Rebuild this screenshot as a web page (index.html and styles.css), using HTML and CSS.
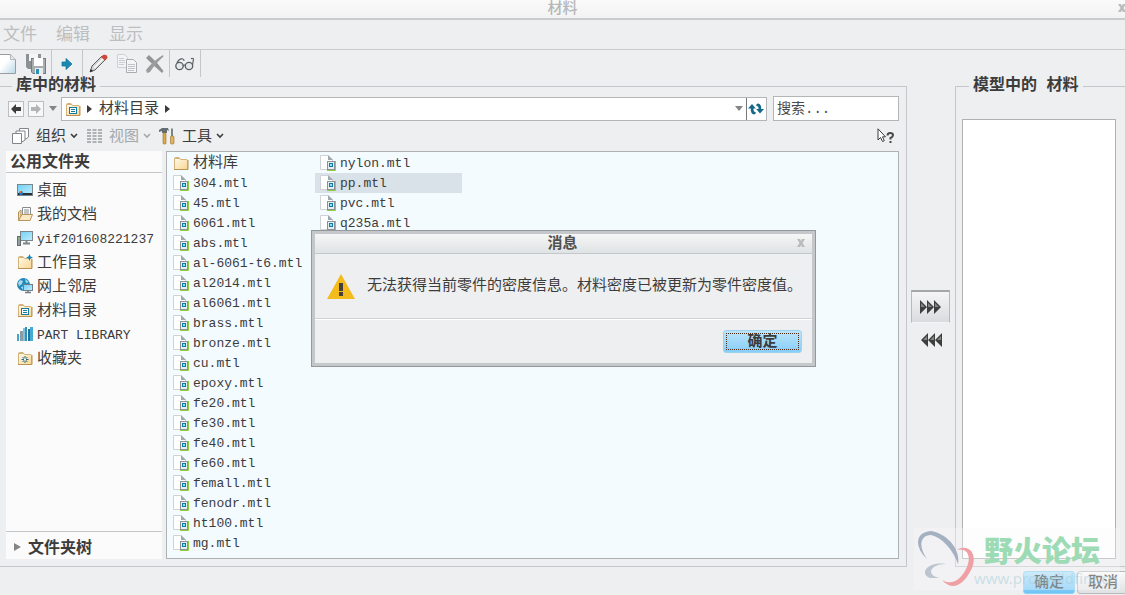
FILE: index.html
```html
<!DOCTYPE html>
<html lang="zh-CN">
<head>
<meta charset="utf-8">
<title>材料</title>
<link rel="stylesheet" href="styles.css">
</head>
<body>
<svg class="defs" aria-hidden="true">
  <defs>
    <linearGradient id="folderFill" x1="0" y1="0" x2="1" y2="1"><stop offset="0" stop-color="#fffaf0"/><stop offset="1" stop-color="#fbd68e"/></linearGradient>
    <linearGradient id="pageFill" x1="0" y1="0" x2="1" y2="1"><stop offset=".4" stop-color="#fff"/><stop offset="1" stop-color="#b9d8e6"/></linearGradient>
    <linearGradient id="screenFill" x1="0" y1="0" x2="1" y2="1"><stop offset="0" stop-color="#6fd0f5"/><stop offset="1" stop-color="#c3ecfc"/></linearGradient>
    <symbol id="folder" viewBox="0 0 16 16"><path d="M1.5 14.500V3.500Q1.500 2.500 2.500 2.500H6L7.500 4.500H13.500Q14.500 4.500 14.500 5.500V14.500Z" fill="url(#folderFill)" stroke="#d3b27a"/><path d="M1 14.500H15V5" fill="none" stroke="#b89356"/><path d="M2 3.500H7" stroke="#d3b27a"/></symbol>
    <symbol id="mtl" viewBox="0 0 16 16"><path d="M.5 14.500V.5H8L12.500 5V14.500Z" fill="#fff" stroke="#d0d3d5"/><path d="M8 0V5H13Z" fill="#9fa8ac"/><path d="M15.500 6V15.500H7" fill="none" stroke="#8bd03a"/><rect x="7.500" y="6.500" width="7" height="8" fill="#e8edef" stroke="#8b9195"/><rect x="9" y="8" width="4" height="4" fill="#0d7ba8"/><rect x="10" y="9" width="2" height="2" fill="#8ee2f5"/></symbol>
    <symbol id="chev" viewBox="0 0 8 6"><path d="M1 1L4 4L7 1" fill="none" stroke="currentColor" stroke-width="1.600"/></symbol>
    <symbol id="right" viewBox="0 0 5 8"><path d="M0 0L5 4L0 8Z" fill="currentColor"/></symbol>
    <symbol id="down" viewBox="0 0 8 5"><path d="M0 0H8L4 5Z" fill="#858585"/></symbol>
    <symbol id="back" viewBox="0 0 12 12"><path d="M1 6L6 1V4H11V8H6V11Z" fill="currentColor"/></symbol>
    <symbol id="close" viewBox="0 0 8 8"><path d="M0 0H3L4 2L5 0H8L5.500 4L8 8H5L4 6L3 8H0L2.500 4Z" fill="#b9bbbc"/></symbol>
    <symbol id="triple" viewBox="0 0 22 14"><path d="M0 0L7 7L0 14ZM7 0L14 7L7 14ZM14 0L21 7L14 14Z" fill="#3e3e3e"/><path d="M1 3L5 7H1ZM8 3L12 7H8ZM15 3L19 7H15Z" fill="#858585"/></symbol>
    <symbol id="catalog" viewBox="0 0 16 16"><use href="#folder"/><rect x="4.500" y="6.500" width="7" height="6" fill="#fff" stroke="#16799f"/><path d="M6 8.500H10M6 10.500H10" stroke="#16799f"/></symbol>
  </defs>
</svg>

<div class="window">
  <header class="titlebar">
    <h1>材料</h1>
    <button class="plain win-close" aria-label="关闭"><svg width="8" height="8"><use href="#close"/></svg></button>
  </header>

  <nav class="menubar">
    <button class="plain">文件</button><button class="plain">编辑</button><button class="plain">显示</button>
  </nav>

  <div class="toolbar">
    <div class="tools first">
      <button class="plain" aria-label="新建"><svg width="16" height="20" viewBox="0 0 16 20"><path d="M-1 .5H10.500L15.500 5.500V19.500H-1Z" fill="url(#pageFill)" stroke="#999da0"/><path d="M10.500 .5V5.500H15.500" fill="#e5e7e8" stroke="#b5b9bb"/></svg></button>
      <button class="plain" aria-label="保存"><svg width="20" height="20" viewBox="0 0 20 20"><path d="M0 0H15V15H2L0 13Z" fill="#8c9194"/><rect x="3" y="0" width="9" height="7" fill="#f3f5f6"/><path d="M5 4H20V20H7L5 18Z" fill="#777c80"/><path d="M6 5H19V19H7L6 18Z" fill="#a8adb0"/><rect x="8" y="4" width="9" height="8" fill="#fff"/><rect x="9" y="14" width="8" height="6" fill="#e7ecef"/><rect x="10" y="15" width="3" height="5" fill="#2c91b5"/></svg></button>
    </div>
    <div class="tools"><button class="plain" aria-label="添加"><svg width="12" height="12" viewBox="0 0 12 12"><path d="M1 4H5V.5L11 6L5 11.500V8H1Z" fill="#168bb6" stroke="#11678a" stroke-width=".7"/></svg></button></div>
    <div class="tools edit">
      <button class="plain" aria-label="编辑"><svg width="19" height="20" viewBox="0 0 19 20"><path d="M1 18L3 12L13 2L17 5L6 16Z" fill="#d2d4d5" stroke="#5f6264"/><path d="M5 14L14 5" stroke="#fff" stroke-width="1.500"/><path d="M12 3L14.500 .8Q18.500 0 18.500 4L16 6.500Z" fill="#d0463b"/><path d="M1 18L1.800 15L4 17Z" fill="#222"/></svg></button>
      <button class="plain" aria-label="复制"><svg width="20" height="20" viewBox="0 0 20 20"><path d="M.5 .5H7.500L10.500 3.500V13.500H.5Z" fill="#f2f3f4" stroke="#ced1d3"/><path d="M2 4.500H7M2 6.500H8M2 8.500H8M2 10.500H7" stroke="#c9cdcf"/><path d="M9.500 5.500H16.500L19.500 8.500V18.500H9.500Z" fill="#f4f5f6" stroke="#a9adb0"/><path d="M11 10.500H18M11 12.500H18M11 14.500H18M11 16.500H17" stroke="#bfc3c5"/></svg></button>
      <button class="plain" aria-label="删除"><svg width="18" height="18" viewBox="0 0 18 18"><path d="M0 3L3 0Q11 7 17.500 16L16 18Q8 11 0 3Z" fill="#929496"/><path d="M17 0L17.500 1.500Q9 9 4 17L1 18L0 15Q7 6 17 0Z" fill="#9a9c9e"/></svg></button>
    </div>
    <div class="tools"><button class="plain" aria-label="查看"><svg width="20" height="14" viewBox="0 0 20 14"><g fill="#e2e9ec" stroke="#5b5f62" stroke-width="1.300"><circle cx="4.500" cy="9" r="3.700"/><circle cx="14" cy="9" r="3.700"/></g><path d="M8 9Q9.300 7 10.500 9M2 6Q4 1 8 2Q9 2 9 4M17.500 8L18.500 2Q17 .5 16 2" fill="none" stroke="#5b5f62" stroke-width="1.200"/></svg></button></div>
  </div>

  <main>
    <fieldset class="group library">
      <legend>库中的材料</legend>
      <div class="path-row">
        <button class="nav-btn" aria-label="后退"><svg width="12" height="12"><use href="#back"/></svg></button>
        <button class="nav-btn forward" aria-label="前进"><svg class="flip" width="12" height="12"><use href="#back"/></svg></button>
        <button class="plain history" aria-label="历史"><svg width="8" height="5"><use href="#down"/></svg></button>
        <div class="path">
          <svg width="16" height="16"><use href="#catalog"/></svg>
          <svg class="crumb" width="5" height="8"><use href="#right"/></svg>
          <a href="#">材料目录</a>
          <svg width="5" height="8"><use href="#right"/></svg>
          <button class="plain drop" aria-label="展开路径"><svg width="8" height="5"><use href="#down"/></svg></button>
          <button class="plain refresh" aria-label="刷新"><svg width="16" height="14" viewBox="0 0 16 14"><path d="M6 12.500Q2.500 12 2.800 6.500H0L4 2L7.800 6.500H5.500Q5 9.500 8 10.500Q7.500 12.500 6 12.500ZM10 1.500Q13.500 2 13.200 7H16L12 11.500L8.200 7H10.500Q11 4.500 8 3.500Q8.500 1.500 10 1.500Z" fill="#16688b"/></svg></button>
        </div>
        <input class="search" type="text" aria-label="搜索" placeholder="搜索...">
      </div>
      <div class="actions">
        <button class="plain organize"><svg width="17" height="16" viewBox="0 0 17 16"><g fill="#fff" stroke="#808589"><path d="M7.500 .5H16.500V9L14 11H7.500Z"/><path d="M4 3H13V12L11 13.500H4Z"/><path d="M.5 5.500H9.500V15.500H.5Z"/></g></svg><span>组织</span><svg width="8" height="6"><use href="#chev"/></svg></button>
        <button class="plain view"><svg width="15" height="14" viewBox="0 0 15 14"><path d="M2 0V14M7.500 0V14M13 0V14" stroke="#afb2b4" stroke-width="4" stroke-dasharray="2 1"/></svg><span>视图</span><svg width="8" height="6"><use href="#chev"/></svg></button>
        <button class="plain kit"><svg width="16" height="17" viewBox="0 0 16 17"><path d="M0 2L3 0H9L10 3L8 2V5H3V3L0 4Z" fill="#666e73"/><rect x="4" y="5" width="3" height="11" rx="1" fill="#dca94e" stroke="#9b6e25" stroke-width=".6"/><path d="M13 0L14 1V8H12V1Z" fill="#7c8589"/><rect x="11.500" y="8" width="3.500" height="8" rx="1" fill="#e3b260" stroke="#9b6e25" stroke-width=".6"/></svg><span>工具</span><svg width="8" height="6"><use href="#chev"/></svg></button>
        <button class="plain help" aria-label="上下文帮助"><svg width="18" height="16" viewBox="0 0 18 16"><path d="M1 .8V12L3.500 9.500L5.500 13.500L7.300 12.700L5.500 8.800H8.500Z" fill="#fff" stroke="#3c3c3c"/><path d="M10.500 7.500Q10.500 5 13 5Q16 5 16 7.300Q16 8.800 13.500 10V11.500" fill="none" stroke="#4a4a4a" stroke-width="2"/><rect x="12.500" y="13" width="2" height="2" fill="#4a4a4a"/></svg></button>
      </div>
      <div class="browser">
        <aside class="sidebar">
          <h2>公用文件夹</h2>
          <ul class="places">
            <li><svg width="16" height="16" viewBox="0 0 16 16"><rect x=".5" y="2.500" width="15" height="11" fill="url(#screenFill)" stroke="#7b868b"/><rect x="1" y="11" width="14" height="2" fill="#26323a"/><circle cx="4" cy="11" r="2" fill="#1c7fd0"/><path d="M3 9H4V11H3Z" fill="#f4733d"/></svg><a href="#">桌面</a></li>
            <li><svg width="16" height="16" viewBox="0 0 16 16"><path d="M1.500 14.500V6L4 4V14Z" fill="#f6d8a0" stroke="#b8935a"/><path d="M5.500 1.500H13.500V11H5.500Z" fill="#fff" stroke="#858b8e"/><path d="M7 4H12M7 6H12M7 8H12" stroke="#858b8e"/><path d="M1.500 14.500L5 8.500H15.500L13 14.500Z" fill="#fde9c4" stroke="#b8935a"/></svg><a href="#">我的文档</a></li>
            <li><svg width="16" height="16" viewBox="0 0 16 16"><rect x="3.500" y="1.500" width="12" height="9" fill="url(#screenFill)" stroke="#7b868b"/><path d="M9.500 11V13M6 13.500H13" stroke="#7b868b" stroke-width="2"/><rect x=".5" y="6.500" width="3" height="9" fill="#969da0" stroke="#656d70"/><rect x="1" y="8" width="2" height="1" fill="#78d342"/></svg><a class="latin" href="#">yif201608221237</a></li>
            <li><svg width="16" height="16" viewBox="0 0 16 16"><use href="#folder"/><path d="M12.500 0L13.500 2.500L16 3.500L13.500 4.500L12.500 7L11.500 4.500L9 3.500L11.500 2.500Z" fill="#1384b5"/></svg><a href="#">工作目录</a></li>
            <li><svg width="16" height="16" viewBox="0 0 16 16"><circle cx="6.500" cy="6.500" r="6.500" fill="#2388ba"/><path d="M3 2L6 3L5 6L2 8L1 5ZM8 1L12 4L9 5ZM4 9L7 8L6 12Z" fill="#a7dced"/><rect x="6.500" y="6.500" width="9" height="6" fill="url(#screenFill)" stroke="#747f84"/><path d="M11 13V14M8 14.500H14" stroke="#747f84" stroke-width="1.500"/></svg><a href="#">网上邻居</a></li>
            <li><svg width="16" height="16"><use href="#catalog"/></svg><a href="#">材料目录</a></li>
            <li><svg width="16" height="16" viewBox="0 0 16 16"><rect y="8" width="2" height="7" fill="#43a4cc"/><rect x="3" y="5" width="3" height="10" fill="#8b9ca4"/><rect x="6" y="2" width="4" height="13" fill="#7dc3df"/><rect x="8" y="1" width="2" height="14" fill="#378fb5"/><rect x="11" y="3" width="2" height="12" fill="#1b769f"/><rect x="13" y="1" width="3" height="14" fill="#45abd2"/></svg><a class="latin" href="#">PART LIBRARY</a></li>
            <li><svg width="16" height="16" viewBox="0 0 16 16"><use href="#folder"/><path d="M8 6V13M4.500 9.500H11.500M5.500 7L10.500 12M10.500 7L5.500 12" stroke="#246783"/><rect x="7" y="8.500" width="2" height="2" fill="#fff"/></svg><a href="#">收藏夹</a></li>
          </ul>
          <button class="plain tree"><svg width="7" height="8" viewBox="0 0 5 8" preserveAspectRatio="none"><path d="M0 0L5 4L0 8Z" fill="#858585"/></svg><span>文件夹树</span></button>
        </aside>
        <ul class="files">
          <li class="cjk"><svg width="16" height="16"><use href="#folder"/></svg><span>材料库</span></li>
          <li><svg width="16" height="16"><use href="#mtl"/></svg><span>304.mtl</span></li>
          <li><svg width="16" height="16"><use href="#mtl"/></svg><span>45.mtl</span></li>
          <li><svg width="16" height="16"><use href="#mtl"/></svg><span>6061.mtl</span></li>
          <li><svg width="16" height="16"><use href="#mtl"/></svg><span>abs.mtl</span></li>
          <li><svg width="16" height="16"><use href="#mtl"/></svg><span>al-6061-t6.mtl</span></li>
          <li><svg width="16" height="16"><use href="#mtl"/></svg><span>al2014.mtl</span></li>
          <li><svg width="16" height="16"><use href="#mtl"/></svg><span>al6061.mtl</span></li>
          <li><svg width="16" height="16"><use href="#mtl"/></svg><span>brass.mtl</span></li>
          <li><svg width="16" height="16"><use href="#mtl"/></svg><span>bronze.mtl</span></li>
          <li><svg width="16" height="16"><use href="#mtl"/></svg><span>cu.mtl</span></li>
          <li><svg width="16" height="16"><use href="#mtl"/></svg><span>epoxy.mtl</span></li>
          <li><svg width="16" height="16"><use href="#mtl"/></svg><span>fe20.mtl</span></li>
          <li><svg width="16" height="16"><use href="#mtl"/></svg><span>fe30.mtl</span></li>
          <li><svg width="16" height="16"><use href="#mtl"/></svg><span>fe40.mtl</span></li>
          <li><svg width="16" height="16"><use href="#mtl"/></svg><span>fe60.mtl</span></li>
          <li><svg width="16" height="16"><use href="#mtl"/></svg><span>femall.mtl</span></li>
          <li><svg width="16" height="16"><use href="#mtl"/></svg><span>fenodr.mtl</span></li>
          <li><svg width="16" height="16"><use href="#mtl"/></svg><span>ht100.mtl</span></li>
          <li><svg width="16" height="16"><use href="#mtl"/></svg><span>mg.mtl</span></li>
          <li><svg width="16" height="16"><use href="#mtl"/></svg><span>nylon.mtl</span></li>
          <li class="selected"><svg width="16" height="16"><use href="#mtl"/></svg><span>pp.mtl</span></li>
          <li><svg width="16" height="16"><use href="#mtl"/></svg><span>pvc.mtl</span></li>
          <li><svg width="16" height="16"><use href="#mtl"/></svg><span>q235a.mtl</span></li>
        </ul>
      </div>
    </fieldset>

    <div class="transfer">
      <button class="move active" aria-label="添加到模型"><svg width="22" height="14"><use href="#triple"/></svg></button>
      <button class="move" aria-label="从模型移除"><svg class="flip" width="22" height="14"><use href="#triple"/></svg></button>
    </div>

    <fieldset class="group model">
      <legend>模型中的 材料</legend>
      <div class="model-list"></div>
    </fieldset>
  </main>

  <footer>
    <button class="btn primary">确定</button>
    <button class="btn">取消</button>
  </footer>

  <div class="watermark">
    <svg width="58" height="58" viewBox="0 0 58 58"><path d="M11 30C-2 18 -1 3 15 2C30 4 45 20 42 35C37 21 27 9 15 6C4 6 2 18 11 30Z" fill="#a3b1c1"/><path d="M30 35C11 32 3 45 14 49L24 49C10 47 13 35 30 35Z" fill="#bcc5cf"/><path d="M40 21C55 13 63 28 54 43C46 57 36 62 26 51C36 57 45 51 51 38C56 25 50 19 40 21Z" fill="#efa0a4"/></svg>
    <div class="mark-text"><strong>野火论坛</strong><span>www.proewildfire.cn</span></div>
  </div>

  <section class="dialog" role="dialog" aria-labelledby="dlg-title">
    <header><h2 id="dlg-title">消息</h2><button class="plain dlg-close" aria-label="关闭"><svg width="8" height="8"><use href="#close"/></svg></button></header>
    <div class="message">
      <svg width="28" height="25" viewBox="0 0 28 25"><path d="M14 0L28 25H0Z" fill="#f3bb1b"/><path d="M12 9H16V17H12ZM12 18H16V22H12Z" fill="#43403a"/></svg>
      <p>无法获得当前零件的密度信息。材料密度已被更新为零件密度值。</p>
    </div>
    <div class="dialog-actions"><button class="confirm"><span>确定</span></button></div>
  </section>
</div>
</body>
</html>
```
FILE: styles.css
```css
* { box-sizing: border-box; }
body {
  margin: 0;
  background: #eeeff1;
  color: #3c3c3c;
  font: 15px/20px "Liberation Mono", "Noto Sans CJK SC", monospace;
}
h1, h2, p, ul { margin: 0; padding: 0; }
ul { list-style: none; }
a { color: inherit; text-decoration: none; }
svg { display: block; flex: none; }
button, input { font: inherit; color: inherit; }
.defs { position: absolute; width: 0; height: 0; }
.plain { display: flex; align-items: center; padding: 0; border: 0; background: none; }
.flip { transform: scaleX(-1); }

.window { position: relative; display: flex; flex-direction: column; min-height: 100vh; overflow: hidden; }
.titlebar {
  position: relative;
  display: flex;
  justify-content: center;
  height: 20px;
  background: linear-gradient(#fafafa, #f3f3f3);
  border-bottom: 2px solid #c9cbcd;
}
.titlebar h1 { font-size: 15px; line-height: 20px; font-weight: 500; color: #b5b6b7; }
.win-close { position: absolute; right: -1px; top: 4px; }
.menubar { display: flex; gap: 19px; height: 30px; padding: 2px 0 0 3px; border-bottom: 1px solid #c9cbcd; font-size: 17px; color: #bcbec0; }

.toolbar { display: flex; height: 27px; }
.tools { display: flex; align-items: center; gap: 9px; padding: 0 9px; border-right: 1px solid #c4c6c8; }
.tools.first { gap: 10px; padding: 0 5px 0 0; }
.tools.edit { padding: 0 5px 0 6px; }
.tools:last-child { padding: 0 5px; }

main { flex: 1; display: grid; grid-template-columns: minmax(0, 1fr) 48px 170px; }
.group { display: flex; flex-direction: column; min-width: 0; margin: 0; padding: 0; border: 1px solid #c4c6c9; }
legend { padding: 1px 4px 0; font-size: 16px; line-height: 17px; font-weight: 700; }
.library { border-left: 0; padding: 1px 7px 7px 6px; }
.library legend { margin-left: 6px; }
.model { border-right: 0; padding: 24px 9px 7px 6px; }
.model legend { margin-left: 7px; }
.model-list { flex: 1; background: #fff; border: 1px solid #afb1b3; }

.path-row { display: flex; align-items: center; height: 25px; padding-left: 2px; }
.nav-btn { display: flex; align-items: center; justify-content: center; width: 16px; height: 16px; margin-right: 4px; padding: 0; border: 1px solid #bbbec0; background: #f8f8f8; }
.forward { color: #b2b4b5; }
.history { margin: 0 4px 0 1px; }
.path { flex: 1; display: flex; align-items: center; gap: 6px; height: 24px; margin-right: 6px; padding-left: 3px; border: 1px solid #b3b5b7; background: #fff; }
.path a { padding-top: 3px; }
.crumb { margin-right: 1px; }
.drop { margin-left: auto; margin-right: -3px; }
.refresh { height: 22px; padding: 0 2px 0 1px; border-left: 1px solid #777a7c; }
.search { width: 126px; height: 25px; padding: 0 3px; border: 1px solid #b3b5b7; border-radius: 0; background: #fff; font-size: 14px; }
.search::placeholder { color: #4a4a4a; opacity: 1; }

.actions { display: flex; align-items: center; height: 30px; padding-left: 6px; }
.actions span { margin: 0 4px 0 7px; padding-top: 3px; }
.view { margin: 0 8px 0 9px; color: #a5a8aa; }
.help { margin-left: auto; margin-right: 4px; }

.browser { flex: 1; display: flex; gap: 4px; }
.sidebar { display: flex; flex-direction: column; width: 156px; background: #fbfbfb; }
.sidebar h2 { height: 22px; padding-left: 4px; border-bottom: 1px solid #c5c7c9; font-size: 16px; line-height: 25px; }
.places { flex: 1; padding: 5px 0 0 11px; }
.places li { display: flex; align-items: center; gap: 4px; height: 24px; white-space: nowrap; }
.places a { padding-top: 3px; }
.latin { font-size: 13px; }
.tree { height: 28px; gap: 7px; padding: 3px 8px 0; border-top: 1px solid #c5c7c9; font-size: 16px; font-weight: 700; }
.tree span { padding-top: 3px; }
.files {
  flex: 1;
  display: grid;
  grid-template-rows: repeat(20, 20px);
  grid-auto-columns: 147px;
  grid-auto-flow: column;
  align-content: start;
  padding: 1px;
  border: 1px solid #afb1b3;
  background: #f3fbff;
  font-size: 13px;
}
.files li { display: flex; align-items: center; gap: 4px; padding-left: 5px; line-height: 18px; white-space: nowrap; }
.files span { padding-top: 2px; }
.files .cjk { font-size: 15px; }
.files .selected { background: #d8e2e8; }

.transfer { display: flex; flex-direction: column; align-items: center; justify-content: center; padding: 2px 1px 0 0; }
.move { display: flex; align-items: center; justify-content: center; width: 39px; height: 33px; padding: 0; border: 1px solid transparent; background: none; }
.move.active { border-color: #a4a6a8 #b7b9bb transparent; border-top-width: 2px; background: linear-gradient(#f5f5f6, #d9dbde); }

footer { display: flex; justify-content: flex-end; gap: 2px; height: 28px; padding-top: 4px; }
.btn { width: 52px; height: 23px; padding: 2px 0 0; border: 1px solid #b7babc; border-radius: 3px; background: linear-gradient(#fafafa, #dfe1e3); color: #444; font-size: 15px; line-height: 19px; font-weight: 500; }
.btn:last-child { margin-right: -4px; }
.btn.primary { border-color: #8fd0f5; background: linear-gradient(#b5e3fc, #70c5f6); color: #3c4a52; }

.watermark { position: absolute; right: 5px; bottom: 5px; display: flex; width: 206px; height: 62px; padding: 1px 0 0 2px; background: rgb(248 250 248 / 35%); pointer-events: none; }
.mark-text { display: flex; flex-direction: column; white-space: nowrap; }
.mark-text strong { padding-left: 10px; color: #9ddbb5; font: 900 29px/40px "Noto Sans CJK SC", sans-serif; }
.mark-text span { color: rgb(160 205 215 / 50%); font: 15px/18px "Noto Sans", sans-serif; }

.dialog { position: absolute; left: 311px; top: 230px; width: 505px; border: 1px solid #96999b; background: #eeeff1; box-shadow: inset 0 0 0 3px #c5c8cb; padding: 3px; }
.dialog header { position: relative; height: 20px; background: linear-gradient(#f6f6f6, #dfe3e4); border-bottom: 1px solid #c3c9ca; }
.dialog h2 { padding-right: 2px; font-size: 15px; line-height: 22px; text-align: center; color: #505050; }
.dlg-close { position: absolute; right: 7px; top: 5px; }
.message { display: flex; align-items: center; gap: 12px; height: 65px; padding-left: 12px; border-bottom: 1px solid #cfd2d3; white-space: nowrap; }
.message p { padding-top: 2px; }
.dialog-actions { display: flex; justify-content: flex-end; height: 44px; padding: 10px 10px 0; border-top: 1px solid #fff; }
.confirm { width: 79px; height: 23px; padding: 2px; border: 1px solid #9bd3ee; border-radius: 3px; background: linear-gradient(#bce5fb, #86cef8); font-weight: 700; line-height: 17px; }
.confirm span { display: block; height: 17px; border: 1px dotted #512b18; }
```
